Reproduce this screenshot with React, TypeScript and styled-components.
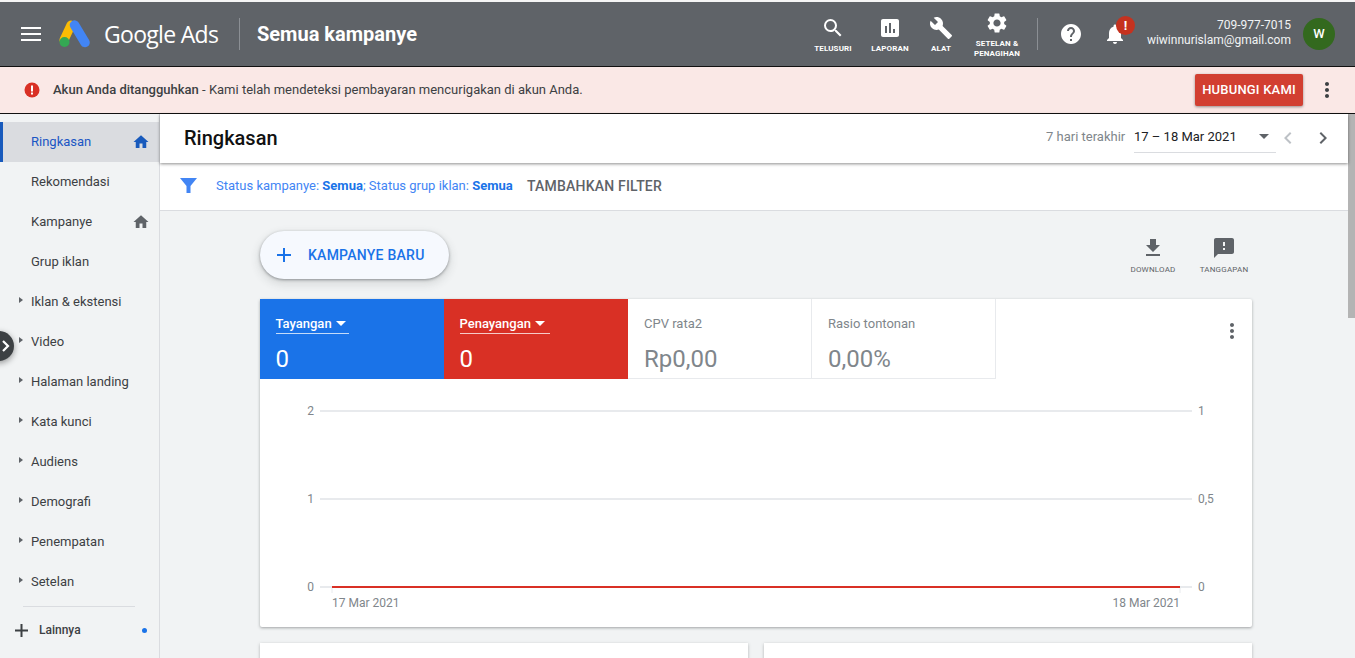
import React from 'react';
import styled, { createGlobalStyle } from 'styled-components';

const Global = createGlobalStyle`
  html, body { margin: 0; padding: 0; height: 100%; overflow: hidden; }
  body { font-family: Roboto, "Liberation Sans", sans-serif; background: #fff; }
  * { box-sizing: border-box; }
`;

const Page = styled.div`
  position: relative;
  width: 1355px;
  height: 658px;
  overflow: hidden;
  display: flex;
  flex-direction: column;
  padding-top: 2px;
  background: #f5f5f5;
`;

const Header = styled.header`
  height: 65px;
  flex: none;
  display: flex;
  align-items: center;
  background: #5f6368;
  border-bottom: 1px solid #111;
  color: #fff;
  padding-left: 21px;
`;

const Burger = styled.svg`
  width: 20px;
  height: 14px;
  margin-right: 18px;
`;

const Logo = styled.svg`
  width: 32px;
  height: 28px;
  margin-right: 13px;
`;

const Wordmark = styled.div`
  font-family: "Open Sans", Roboto, sans-serif;
  font-size: 23px;
  letter-spacing: -0.7px;
  width: 118px;
`;

const VDivider = styled.div<{ $h: number; $mx: string }>`
  width: 1px;
  height: ${(p) => p.$h}px;
  background: #8b8f94;
  margin: ${(p) => p.$mx};
`;

const AccountTitle = styled.div`
  font-size: 20px;
  font-weight: 700;
  width: 558px;
`;

const NavTool = styled.div<{ $w: number; $ml?: number; $mt?: number }>`
  width: ${(p) => p.$w}px;
  margin-left: ${(p) => p.$ml || 0}px;
  margin-top: ${(p) => p.$mt || 0}px;
  display: flex;
  flex-direction: column;
  align-items: center;
  font-size: 8px;
  font-weight: 700;
  line-height: 10px;
  text-align: center;
  letter-spacing: 0.1px;
  svg { width: 24px; height: 24px; margin-bottom: 4px; }
`;

const Tools = styled.div`
  display: flex;
  align-items: flex-start;
  margin-top: 6px;
`;

const IconSlot = styled.div<{ $ml: number }>`
  position: relative;
  width: 24px;
  height: 24px;
  margin-left: ${(p) => p.$ml}px;
  svg { width: 24px; height: 24px; display: block; }
`;

const AlertDot = styled.div`
  position: absolute;
  top: -6px;
  left: 13px;
  width: 19px;
  height: 19px;
  border-radius: 50%;
  background: #c5321f;
  font-size: 13px;
  font-weight: 700;
  line-height: 19px;
  text-align: center;
`;

const Account = styled.div`
  margin: 0 0 3px 19px;
  width: 145px;
  text-align: right;
  font-size: 12px;
  line-height: 15px;
  color: #f1f3f4;
`;

const Avatar = styled.div`
  width: 32px;
  height: 32px;
  margin-left: 12px;
  border-radius: 50%;
  background: #33691e;
  font-size: 13px;
  font-weight: 500;
  line-height: 32px;
  text-align: center;
`;

const Banner = styled.div`
  height: 47px;
  flex: none;
  display: flex;
  align-items: center;
  background: #fae8e6;
  border-bottom: 1px solid #111;
  padding-left: 24px;
  font-size: 13px;
  color: #3c4043;
  b { font-weight: 500; }
`;

const BannerIcon = styled.svg`
  width: 16px;
  height: 16px;
  margin-right: 13px;
`;

const BannerText = styled.div`
  width: 1142px;
  margin-bottom: 2px;
`;

const RedButton = styled.div`
  width: 108px;
  height: 32px;
  background: #d23f31;
  border-radius: 2px;
  box-shadow: 0 1px 3px rgba(0, 0, 0, 0.4);
  color: #fff;
  font-size: 13px;
  font-weight: 500;
  line-height: 32px;
  text-align: center;
  letter-spacing: 0.2px;
`;

const Kebab = styled.svg<{ $ml: number }>`
  width: 24px;
  height: 24px;
  margin-left: ${(p) => p.$ml}px;
`;

const Body = styled.div`
  flex: 1;
  display: flex;
  min-height: 0;
`;

const Sidebar = styled.nav`
  width: 160px;
  flex: none;
  background: #f1f3f4;
  border-right: 1px solid #dadce0;
  padding-top: 8px;
`;

const NavItem = styled.div<{ $active?: boolean }>`
  height: 40px;
  display: flex;
  align-items: center;
  padding: 0 9px 0 ${(p) => (p.$active ? 28 : 31)}px;
  position: relative;
  font-size: 13px;
  color: ${(p) => (p.$active ? '#1a56c4' : '#3c4043')};
  background: ${(p) => (p.$active ? '#dadce0' : 'transparent')};
  border-left: ${(p) => (p.$active ? '3px solid #185abc' : 'none')};
  span { flex: 1; margin-bottom: 2px; }
  svg { width: 18px; height: 18px; }
`;

const Caret = styled.i`
  position: absolute;
  left: 19px;
  top: 15px;
  border-left: 4px solid #5f6368;
  border-top: 3.5px solid transparent;
  border-bottom: 3.5px solid transparent;
`;

const SideRule = styled.div`
  height: 1px;
  margin: 4px 24px 0 23px;
  background: #dadce0;
`;

const MoreRow = styled.div`
  height: 46px;
  display: flex;
  align-items: center;
  padding-left: 15px;
  font-size: 12px;
  font-weight: 500;
  color: #3c4043;
  svg { width: 13px; height: 13px; margin-right: 11px; }
  span { width: 103px; }
`;

const BlueDot = styled.i`
  width: 5px;
  height: 5px;
  border-radius: 50%;
  background: #1a73e8;
`;

const Main = styled.main`
  flex: 1;
  min-width: 0;
  background: #f1f3f4;
  display: flex;
  flex-direction: column;
`;

const TitleBar = styled.div`
  height: 49px;
  flex: none;
  display: flex;
  align-items: center;
  background: #fff;
  box-shadow: 0 1px 3px rgba(0, 0, 0, 0.45);
  padding: 0 0 2px 24px;
  position: relative;
  z-index: 1;
`;

const PageTitle = styled.h1`
  margin: 0;
  font-size: 20px;
  font-weight: 500;
  color: #111;
  width: 862px;
`;

const RangeLabel = styled.div`
  font-size: 13px;
  color: #80868b;
  width: 88px;
  margin-bottom: 2px;
`;

const RangeSelect = styled.div`
  width: 142px;
  height: 32px;
  display: flex;
  align-items: center;
  justify-content: space-between;
  border-bottom: 1px solid #dadce0;
  font-size: 13px;
  color: #202124;
  padding: 0 7px 0 0;
  margin-bottom: 2px;
  i {
    border-top: 5px solid #5f6368;
    border-left: 5px solid transparent;
    border-right: 5px solid transparent;
  }
`;

const Chevron = styled.svg<{ $ml: number }>`
  width: 24px;
  height: 24px;
  margin-left: ${(p) => p.$ml}px;
`;

const FilterBar = styled.div`
  height: 48px;
  flex: none;
  display: flex;
  align-items: center;
  background: #fff;
  border-bottom: 1px solid #dadce0;
  padding: 0 0 2px 19px;
  font-size: 13px;
  color: #4285f4;
  svg { width: 19px; height: 19px; margin-right: 18px; }
  b { font-weight: 700; color: #1a73e8; }
`;

const FilterText = styled.div`
  width: 311px;
`;

const AddFilter = styled.div`
  font-size: 14px;
  font-weight: 500;
  color: #5f6368;
  letter-spacing: 0.2px;
`;

const Scroller = styled.div`
  flex: 1;
  min-height: 0;
  overflow: hidden;
  padding: 20px 96px 0 100px;
  display: flex;
  flex-direction: column;
`;

const ActionRow = styled.div`
  display: flex;
  align-items: flex-start;
  height: 68px;
  flex: none;
`;

const NewCampaign = styled.div`
  width: 189px;
  height: 48px;
  border-radius: 24px;
  background: #f6f9fe;
  box-shadow: 0 1px 3px rgba(60, 64, 67, 0.5), 0 4px 8px 2px rgba(60, 64, 67, 0.12);
  display: flex;
  align-items: center;
  padding-left: 16px;
  color: #1a73e8;
  font-size: 14px;
  font-weight: 500;
  letter-spacing: 0.25px;
  svg { width: 16px; height: 16px; margin-right: 16px; }
`;

const SmallAction = styled.div<{ $ml: number; $w: number }>`
  width: ${(p) => p.$w}px;
  margin-left: ${(p) => p.$ml}px;
  margin-top: 5px;
  display: flex;
  flex-direction: column;
  align-items: center;
  font-size: 8px;
  color: #5f6368;
  letter-spacing: 0.2px;
  svg { width: 24px; height: 24px; margin-bottom: 5px; }
`;

const Card = styled.section`
  position: relative;
  height: 328px;
  flex: none;
  background: #fff;
  border-radius: 2px;
  box-shadow: 0 1px 3px rgba(60, 64, 67, 0.45);
`;

const Tiles = styled.div`
  display: flex;
  height: 80px;
`;

const Tile = styled.div<{ $bg?: string }>`
  width: 184px;
  height: 80px;
  padding: 17px 0 0 ${(p) => (p.$bg ? 15.5 : 16)}px;
  background: ${(p) => p.$bg || '#fff'};
  color: ${(p) => (p.$bg ? '#fff' : '#80868b')};
  border-right: ${(p) => (p.$bg ? 'none' : '1px solid #e8eaed')};
  border-bottom: ${(p) => (p.$bg ? 'none' : '1px solid #e8eaed')};
`;

const TileLabel = styled.div<{ $w?: number }>`
  display: flex;
  align-items: flex-start;
  width: ${(p) => (p.$w ? `${p.$w}px` : 'auto')};
  height: 18px;
  font-size: 13px;
  line-height: 15px;
  font-weight: ${(p) => (p.$w ? 500 : 400)};
  border-bottom: ${(p) => (p.$w ? '1px solid rgba(255,255,255,.75)' : 'none')};
  i {
    margin: 5px 0 0 4px;
    border-top: 5px solid #fff;
    border-left: 5px solid transparent;
    border-right: 5px solid transparent;
  }
`;

const TileValue = styled.div`
  font-size: 24px;
  line-height: 28px;
  margin-top: 11px;
`;

const CardMenu = styled.svg`
  position: absolute;
  top: 20px;
  right: 8px;
  width: 24px;
  height: 24px;
`;

const ChartSvg = styled.svg`
  display: block;
  width: 992px;
  height: 248px;
  text {
    font-family: Roboto, "Liberation Sans", sans-serif;
    font-size: 12px;
    fill: #80868b;
  }
`;

const BottomRow = styled.div`
  display: flex;
  gap: 16px;
  margin-top: 16px;
  flex: none;
`;

const BottomCard = styled.div`
  flex: 1;
  height: 120px;
  background: #fff;
  box-shadow: 0 1px 3px rgba(60, 64, 67, 0.35);
`;

const ScrollTrack = styled.div`
  width: 7px;
  flex: none;
  background: #f1f3f4;
  position: relative;
  div {
    position: absolute;
    top: 0;
    left: 0;
    width: 7px;
    height: 204px;
    background: #b4b4b4;
  }
`;

const ExpandHandle = styled.div`
  position: absolute;
  left: -16px;
  top: 331px;
  width: 30px;
  height: 30px;
  border-radius: 50%;
  background: #3c4043;
  box-shadow: 0 2px 6px rgba(0, 0, 0, 0.4);
  display: flex;
  align-items: center;
  justify-content: flex-end;
  padding-right: 1px;
  svg { width: 14px; height: 14px; }
`;

const HomeIcon = ({ color }: { color: string }) => (
  <svg viewBox="0 0 24 24" fill={color}>
    <path d="M10 20v-6h4v6h5v-8h3L12 3 2 12h3v8z" />
  </svg>
);

const DOTS = 'M12 8c1.1 0 2-.9 2-2s-.9-2-2-2-2 .9-2 2 .9 2 2 2zm0 2c-1.1 0-2 .9-2 2s.9 2 2 2 2-.9 2-2-.9-2-2-2zm0 6c-1.1 0-2 .9-2 2s.9 2 2 2 2-.9 2-2-.9-2-2-2z';

const navItems = ['Iklan & ekstensi', 'Video', 'Halaman landing', 'Kata kunci', 'Audiens', 'Demografi', 'Penempatan', 'Setelan'];

const App: React.FC = () => {
  return (
    <Page>
      <Global />
      <Header>
        <Burger viewBox="0 0 20 14" fill="#fff">
          <rect y="0" width="20" height="2" />
          <rect y="6" width="20" height="2" />
          <rect y="12" width="20" height="2" />
        </Burger>
        <Logo viewBox="0 0 32 28">
          <path d="M12 5 L5 20" stroke="#fbbc04" strokeWidth="9" strokeLinecap="round" />
          <path d="M15.5 5 L26 22.5" stroke="#4285f4" strokeWidth="9.5" strokeLinecap="round" />
          <circle cx="5.5" cy="22" r="5" fill="#34a853" />
        </Logo>
        <Wordmark>Google Ads</Wordmark>
        <VDivider $h={32} $mx="0 17px 0 17px" />
        <AccountTitle>Semua kampanye</AccountTitle>
        <Tools>
          <NavTool $w={36}>
            <svg viewBox="0 0 24 24" fill="#fff"><path d="M15.5 14h-.79l-.28-.27A6.47 6.47 0 0 0 16 9.5 6.5 6.5 0 1 0 9.5 16c1.61 0 3.09-.59 4.23-1.57l.27.28v.79l5 4.99L20.49 19l-4.99-5zm-6 0C7.01 14 5 11.99 5 9.5S7.01 5 9.5 5 14 7.01 14 9.5 11.99 14 9.5 14z" /></svg>
            TELUSURI
          </NavTool>
          <NavTool $w={38} $ml={20}>
            <svg viewBox="0 0 24 24" fill="#fff"><path d="M19 3H5c-1.1 0-2 .9-2 2v14c0 1.1.9 2 2 2h14c1.1 0 2-.9 2-2V5c0-1.1-.9-2-2-2zM9 17H7v-7h2v7zm4 0h-2V7h2v10zm4 0h-2v-4h2v4z" /></svg>
            LAPORAN
          </NavTool>
          <NavTool $w={24} $ml={20}>
            <svg viewBox="0 0 24 24" fill="#fff"><path d="M22.7 19l-9.1-9.1c.9-2.3.4-5-1.5-6.9-2-2-5-2.4-7.4-1.3L9 6 6 9 1.6 4.7C.4 7.1.9 10.1 2.9 12.1c1.9 1.9 4.6 2.4 6.9 1.5l9.1 9.1c.4.4 1 .4 1.4 0l2.3-2.3c.5-.4.5-1.1.1-1.4z" /></svg>
            ALAT
          </NavTool>
          <NavTool $w={46} $ml={21} $mt={-5}>
            <svg viewBox="0 0 24 24" fill="#fff"><path d="M19.14 12.94c.04-.3.06-.61.06-.94 0-.32-.02-.64-.07-.94l2.03-1.58a.49.49 0 0 0 .12-.61l-1.92-3.32a.488.488 0 0 0-.59-.22l-2.39.96c-.5-.38-1.03-.7-1.62-.94l-.36-2.54a.484.484 0 0 0-.48-.41h-3.84c-.24 0-.43.17-.47.41l-.36 2.54c-.59.24-1.13.57-1.62.94l-2.39-.96c-.22-.08-.47 0-.59.22L2.74 8.87c-.12.21-.08.47.12.61l2.03 1.58c-.05.3-.09.63-.09.94s.02.64.07.94l-2.03 1.58a.49.49 0 0 0-.12.61l1.92 3.32c.12.22.37.29.59.22l2.39-.96c.5.38 1.03.7 1.62.94l.36 2.54c.05.24.24.41.48.41h3.84c.24 0 .44-.17.47-.41l.36-2.54c.59-.24 1.13-.56 1.62-.94l2.39.96c.22.08.47 0 .59-.22l1.92-3.32c.12-.22.07-.47-.12-.61l-2.01-1.58zM12 15.6c-1.98 0-3.6-1.62-3.6-3.6s1.62-3.6 3.6-3.6 3.6 1.62 3.6 3.6-1.62 3.6-3.6 3.6z" /></svg>
            SETELAN &amp;<br />PENAGIHAN
          </NavTool>
        </Tools>
        <VDivider $h={32} $mx="0 0 0 17px" />
        <IconSlot $ml={21}>
          <svg viewBox="0 0 24 24" fill="#fff"><path d="M12 2C6.48 2 2 6.48 2 12s4.48 10 10 10 10-4.48 10-10S17.52 2 12 2zm1 17h-2v-2h2v2zm2.07-7.75l-.9.92C13.45 12.9 13 13.5 13 15h-2v-.5c0-1.1.45-2.1 1.17-2.83l1.24-1.26c.37-.36.59-.86.59-1.41 0-1.1-.9-2-2-2s-2 .9-2 2H8c0-2.21 1.79-4 4-4s4 1.79 4 4c0 .88-.36 1.68-.93 2.25z" /></svg>
        </IconSlot>
        <IconSlot $ml={20}>
          <svg viewBox="0 0 24 24" fill="#fff"><path d="M12 22c1.1 0 2-.9 2-2h-4c0 1.1.9 2 2 2zm6-6v-5c0-3.07-1.63-5.64-4.5-6.32V4c0-.83-.67-1.5-1.5-1.5s-1.5.67-1.5 1.5v.68C7.64 5.36 6 7.92 6 11v5l-2 2v1h16v-1l-2-2z" /></svg>
          <AlertDot>!</AlertDot>
        </IconSlot>
        <Account>
          709-977-7015
          <br />
          wiwinnurislam@gmail.com
        </Account>
        <Avatar>W</Avatar>
      </Header>

      <Banner>
        <BannerIcon viewBox="0 0 16 16">
          <circle cx="8" cy="8" r="7.5" fill="#d93025" />
          <rect x="7" y="3.5" width="2" height="6" fill="#fff" />
          <rect x="7" y="10.5" width="2" height="2" fill="#fff" />
        </BannerIcon>
        <BannerText>
          <b>Akun Anda ditangguhkan</b> - Kami telah mendeteksi pembayaran mencurigakan di akun Anda.
        </BannerText>
        <RedButton>HUBUNGI KAMI</RedButton>
        <Kebab $ml={12} viewBox="0 0 24 24" fill="#3c4043"><path d={DOTS} /></Kebab>
      </Banner>

      <Body>
        <Sidebar>
          <NavItem $active>
            <span>Ringkasan</span>
            <HomeIcon color="#185abc" />
          </NavItem>
          <NavItem><span>Rekomendasi</span></NavItem>
          <NavItem>
            <span>Kampanye</span>
            <HomeIcon color="#5f6368" />
          </NavItem>
          <NavItem><span>Grup iklan</span></NavItem>
          {navItems.map((label) => (
            <NavItem key={label}>
              <Caret />
              <span>{label}</span>
            </NavItem>
          ))}
          <SideRule />
          <MoreRow>
            <svg viewBox="0 0 13 13" fill="#3c4043">
              <rect x="5.5" width="2" height="13" />
              <rect y="5.5" width="13" height="2" />
            </svg>
            <span>Lainnya</span>
            <BlueDot />
          </MoreRow>
        </Sidebar>

        <Main>
          <TitleBar>
            <PageTitle>Ringkasan</PageTitle>
            <RangeLabel>7 hari terakhir</RangeLabel>
            <RangeSelect>
              17 – 18 Mar 2021
              <i />
            </RangeSelect>
            <Chevron $ml={0} viewBox="0 0 24 24" fill="#bdc1c6"><path d="M15.41 7.41 14 6l-6 6 6 6 1.41-1.41L10.83 12z" /></Chevron>
            <Chevron $ml={11} viewBox="0 0 24 24" fill="#5f6368"><path d="M10 6 8.59 7.41 13.17 12l-4.58 4.59L10 18l6-6z" /></Chevron>
          </TitleBar>
          <FilterBar>
            <svg viewBox="0 0 19 19" fill="#4285f4"><path d="M1 2h17l-6.5 8v7h-4v-7z" /></svg>
            <FilterText>
              Status kampanye: <b>Semua</b>; Status grup iklan: <b>Semua</b>
            </FilterText>
            <AddFilter>TAMBAHKAN FILTER</AddFilter>
          </FilterBar>
          <Scroller>
            <ActionRow>
              <NewCampaign>
                <svg viewBox="0 0 16 16" fill="#1a73e8">
                  <rect x="7" y="1" width="2" height="14" />
                  <rect x="1" y="7" width="14" height="2" />
                </svg>
                KAMPANYE BARU
              </NewCampaign>
              <SmallAction $ml={680} $w={48}>
                <svg viewBox="0 0 24 24" fill="#5f6368"><path d="M19 9h-4V3H9v6H5l7 7 7-7zM5 18v2h14v-2H5z" /></svg>
                DOWNLOAD
              </SmallAction>
              <SmallAction $ml={22} $w={50}>
                <svg viewBox="0 0 24 24" fill="#5f6368"><path d="M20 2H4c-1.1 0-2 .9-2 2v18l4-4h14c1.1 0 2-.9 2-2V4c0-1.1-.9-2-2-2zm-7 12h-2v-2h2v2zm0-4h-2V6h2v4z" /></svg>
                TANGGAPAN
              </SmallAction>
            </ActionRow>
            <Card>
              <Tiles>
                <Tile $bg="#1a73e8">
                  <TileLabel $w={73}>Tayangan<i /></TileLabel>
                  <TileValue>0</TileValue>
                </Tile>
                <Tile $bg="#d93025">
                  <TileLabel $w={90}>Penayangan<i /></TileLabel>
                  <TileValue>0</TileValue>
                </Tile>
                <Tile>
                  <TileLabel>CPV rata2</TileLabel>
                  <TileValue>Rp0,00</TileValue>
                </Tile>
                <Tile>
                  <TileLabel>Rasio tontonan</TileLabel>
                  <TileValue>0,00%</TileValue>
                </Tile>
              </Tiles>
              <CardMenu viewBox="0 0 24 24" fill="#5f6368"><path d={DOTS} /></CardMenu>
              <ChartSvg viewBox="0 0 992 248">
                <g stroke="#e8eaed" strokeWidth="2">
                  <line x1="60" y1="32" x2="932" y2="32" />
                  <line x1="60" y1="120" x2="932" y2="120" />
                  <line x1="60" y1="208" x2="932" y2="208" />
                </g>
                <line x1="72" y1="208" x2="72" y2="214" stroke="#e8eaed" />
                <line x1="920" y1="208" x2="920" y2="214" stroke="#e8eaed" />
                <line x1="72" y1="208" x2="920" y2="208" stroke="#d93025" strokeWidth="2" />
                <text x="54" y="36" textAnchor="end">2</text>
                <text x="54" y="124" textAnchor="end">1</text>
                <text x="54" y="212" textAnchor="end">0</text>
                <text x="938" y="36">1</text>
                <text x="938" y="124">0,5</text>
                <text x="938" y="212">0</text>
                <text x="72" y="228">17 Mar 2021</text>
                <text x="920" y="228" textAnchor="end">18 Mar 2021</text>
              </ChartSvg>
            </Card>
            <BottomRow>
              <BottomCard />
              <BottomCard />
            </BottomRow>
          </Scroller>
        </Main>
        <ScrollTrack><div /></ScrollTrack>
      </Body>

      <ExpandHandle>
        <svg viewBox="0 0 14 14" fill="none" stroke="#fff" strokeWidth="2.2"><path d="M4 2l5 5-5 5" /></svg>
      </ExpandHandle>
    </Page>
  );
};

export default App;
